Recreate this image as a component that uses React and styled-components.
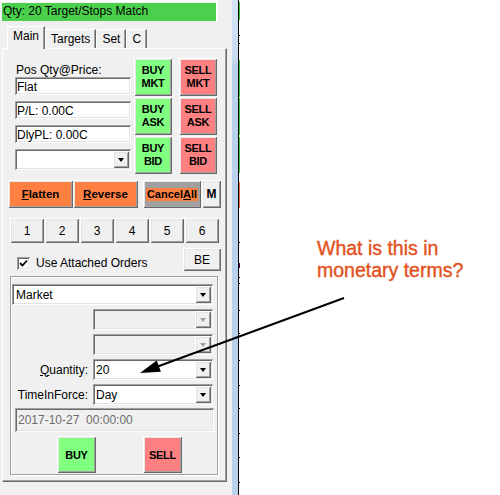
import React from 'react';
import styled, { createGlobalStyle, css } from 'styled-components';

const Global = createGlobalStyle`
  html, body { margin: 0; padding: 0; background: #ffffff; }
  body {
    font-family: "Liberation Sans", Arial, sans-serif;
    font-size: 12px;
    color: #000;
  }
  * { box-sizing: border-box; }
`;

/* classic 3D edges */
const raised = css`
  box-shadow: inset 1px 1px 0 #ffffff, inset -1px -1px 0 #696969,
    inset 2px 2px 0 #e3e3e3, inset -2px -2px 0 #a0a0a0;
`;
const sunken = css`
  box-shadow: inset 1px 1px 0 #a0a0a0, inset -1px -1px 0 #ffffff,
    inset 2px 2px 0 #696969, inset -2px -2px 0 #e3e3e3;
`;

const Page = styled.div`
  position: relative;
  width: 500px;
  height: 495px;
  overflow: hidden;
  display: flex;
`;

const Window = styled.div`
  width: 232px;
  flex: none;
  background: #f0f0f0;
  display: flex;
  flex-direction: column;
`;

const StatusFrame = styled.div`
  width: 218px;
  height: 22px;
  border-top: 2px solid #ffffff;
  border-right: 2px solid #ffffff;
  padding: 1px 0 1px 2px;
`;

const StatusLabel = styled.div`
  height: 18px;
  background: #4ccf4c;
  padding: 1px 0 0 1px;
  line-height: 14px;
  white-space: nowrap;
`;

const TabStrip = styled.div`
  display: flex;
  align-items: flex-end;
  height: 22px;
  margin: 4px 0 0 7px;
`;

const Tab = styled.div`
  position: relative;
  height: ${(p) => (p.$active ? 23 : 19)}px;
  margin-bottom: ${(p) => (p.$active ? -1 : 0)}px;
  z-index: ${(p) => (p.$active ? 1 : 0)};
  padding: 2px 5px 0 5px;
  line-height: 14px;
  background: #f0f0f0;
  border-top: 1px solid #ffffff;
  border-left: 1px solid #ffffff;
  border-right: 1px solid #696969;
  box-shadow: inset -1px 0 0 #a0a0a0;
`;

const Panel = styled.div`
  margin-left: 2px;
  width: 225px;
  border-style: solid;
  border-width: 1px;
  border-color: #ffffff #696969 #696969 #ffffff;
  box-shadow: inset -1px -1px 0 #a0a0a0;
  padding: 9px 0 6px 0;
  display: flex;
  flex-direction: column;
`;

const TradeBlock = styled.div`
  display: flex;
  padding-left: 12px;
`;

const InfoColumn = styled.div`
  width: 116px;
  padding-top: 5px;
  display: flex;
  flex-direction: column;
`;

const FieldLabel = styled.div`
  line-height: 14px;
  padding-left: 1px;
`;

const TextBox = styled.div`
  height: 18px;
  background: #ffffff;
  ${sunken};
  padding: 3px 0 0 2px;
  line-height: 14px;
  white-space: nowrap;
  & + & { margin-top: 6px; }
`;

const ComboBox = styled.div`
  display: flex;
  height: ${(p) => p.$height || 21}px;
  width: ${(p) => p.$width}px;
  margin-top: ${(p) => p.$top || 0}px;
  margin-left: ${(p) => p.$left || 0}px;
  background: ${(p) => (p.$disabled ? '#f0f0f0' : '#ffffff')};
  ${sunken};
  padding: 2px;
`;

const ComboText = styled.div`
  flex: 1;
  line-height: 14px;
  padding: 2px 0 0 ${(p) => p.$indent || 1}px;
  white-space: nowrap;
`;

const DropButton = styled.div`
  width: 16px;
  background: #f0f0f0;
  ${raised};
  display: flex;
  align-items: center;
  justify-content: center;
`;

const Arrow = styled.span`
  width: 0;
  height: 0;
  border-left: 3.5px solid transparent;
  border-right: 3.5px solid transparent;
  border-top: 4px solid ${(p) => (p.$disabled ? '#a0a0a0' : '#000000')};
  margin-top: 1px;
`;

const QuickGrid = styled.div`
  margin-left: 3px;
  display: grid;
  grid-template-columns: 38px 38px;
  grid-auto-rows: 38px;
  column-gap: 7px;
  row-gap: 1px;
`;

const tones = {
  buy: '#80ff80',
  sell: '#ff8080',
  orange: '#ff8040',
  gray: '#a0a0a0',
  plain: '#f0f0f0',
};

const QuickButton = styled.div`
  background: ${(p) => tones[p.$tone]};
  ${raised};
  display: flex;
  align-items: center;
  justify-content: center;
  text-align: center;
  font-weight: bold;
  font-size: 11px;
  letter-spacing: -0.3px;
  line-height: 13px;
`;

const ActionRow = styled.div`
  display: flex;
  height: 28px;
  margin-top: 6px;
  padding-left: 5px;
`;

const ActionButton = styled.div`
  width: ${(p) => p.$w}px;
  margin-left: ${(p) => p.$gap || 0}px;
  background: ${(p) => tones[p.$tone]};
  ${raised};
  display: flex;
  align-items: center;
  justify-content: center;
  font-weight: bold;
  font-size: ${(p) => p.$size || 11.5}px;
  white-space: nowrap;
`;

const CancelLabel = styled.span`
  background: #ff8040;
  font-size: 11px;
  line-height: 13px;
  padding: 0 1px;
`;

const NumberRow = styled.div`
  display: flex;
  gap: 1px;
  height: 25px;
  margin-top: 10px;
  padding-left: 7px;
`;

const NumberButton = styled.div`
  width: 34px;
  background: #f0f0f0;
  ${raised};
  display: flex;
  align-items: center;
  justify-content: center;
`;

const OptionRow = styled.div`
  display: flex;
  align-items: flex-start;
  height: 23px;
  margin-top: 5px;
  padding-left: 14px;
`;

const CheckBox = styled.span`
  width: 13px;
  height: 13px;
  margin-top: 9px;
  background: #ffffff;
  ${sunken};
  display: flex;
  align-items: center;
  justify-content: center;
`;

const CheckLabel = styled.span`
  margin: 8px 0 0 6px;
  line-height: 14px;
`;

const SmallButton = styled.div`
  width: 38px;
  height: 23px;
  margin: 0 5px 0 auto;
  background: #f0f0f0;
  ${raised};
  display: flex;
  align-items: center;
  justify-content: center;
`;

const GroupBox = styled.div`
  width: 208px;
  margin: 5px 0 0 7px;
  border: 1px solid #a0a0a0;
  box-shadow: inset 1px 1px 0 #ffffff, 1px 1px 0 #ffffff;
  padding: 7px 0 1px 0;
  display: flex;
  flex-direction: column;
  gap: 4px;
`;

const FieldRow = styled.div`
  display: grid;
  grid-template-columns: 82px 120px;
  align-items: center;
`;

const RowLabel = styled.span`
  text-align: right;
  padding-right: 5px;
  line-height: 14px;
  white-space: nowrap;
`;

const DateField = styled.div`
  height: 24px;
  width: 199px;
  margin: -1px 0 0 4px;
  background: #f0f0f0;
  ${sunken};
  padding: 5px 0 0 3px;
  line-height: 14px;
  color: #6d6d6d;
  white-space: pre;
`;

const SubmitRow = styled.div`
  display: flex;
  gap: 47px;
  padding-left: 46px;
`;

const SubmitButton = styled.div`
  width: 39px;
  height: 37px;
  background: ${(p) => tones[p.$tone]};
  ${raised};
  display: flex;
  align-items: center;
  justify-content: center;
  font-weight: bold;
  font-size: 11px;
  letter-spacing: -0.3px;
`;

const BorderStrip = styled.div`
  width: 7px;
  flex: none;
  background: linear-gradient(
    to bottom,
    #d4e5f6 0,
    #c8dcf0 60px,
    #b9d1ea 66px,
    #b9d1ea 100%
  );
  border-right: 1px solid #000000;
`;

const Desktop = styled.div`
  flex: 1;
  background: #ffffff;
`;

const EdgeMarks = styled.svg`
  display: block;
`;

const Overlay = styled.svg`
  position: absolute;
  left: 0;
  top: 0;
  pointer-events: none;
`;

const Note = styled.div`
  position: absolute;
  left: 317px;
  top: 238px;
  font-family: "Liberation Sans", Arial, sans-serif;
  font-size: 19.5px;
  line-height: 21.5px;
  color: #e2521d;
  -webkit-text-stroke: 0.4px #e2521d;
`;

const tabs = ['Main', 'Targets', 'Set', 'C'];

const edgeMarks = [
  [2, 18, '#3cc83c'],
  [35, 1, '#000'],
  [43, 1, '#000'],
  [60, 37, '#3cc83c'],
  [98, 37, '#3cc83c'],
  [137, 36, '#3cc83c'],
  [182, 26, '#e8703a'],
  [242, 1, '#000'],
  [263, 5, '#400040'],
  [277, 1, '#000'],
  [283, 1, '#000'],
  [310, 1, '#000'],
  [333, 1, '#000'],
  [360, 1, '#000'],
  [385, 1, '#000'],
  [408, 1, '#000'],
  [433, 1, '#000'],
  [457, 1, '#000'],
  [482, 1, '#000'],
];

function Combo({ width, text, disabled, top, left, indent }) {
  return (
    <ComboBox $width={width} $disabled={disabled} $top={top} $left={left}>
      <ComboText $indent={indent}>{text}</ComboText>
      <DropButton>
        <Arrow $disabled={disabled} />
      </DropButton>
    </ComboBox>
  );
}

export default function App() {
  return (
    <>
      <Global />
      <Page>
        <Window>
          <StatusFrame>
            <StatusLabel>Qty: 20 Target/Stops Match</StatusLabel>
          </StatusFrame>
          <TabStrip>
            {tabs.map((t) => (
              <Tab key={t} $active={t === 'Main'}>
                {t}
              </Tab>
            ))}
          </TabStrip>
          <Panel>
            <TradeBlock>
              <InfoColumn>
                <FieldLabel>Pos Qty@Price:</FieldLabel>
                <TextBox>Flat</TextBox>
                <TextBox>P/L: 0.00C</TextBox>
                <TextBox>DlyPL: 0.00C</TextBox>
                <Combo width={116} top={6} text="" />
              </InfoColumn>
              <QuickGrid>
                <QuickButton $tone="buy">BUY<br />MKT</QuickButton>
                <QuickButton $tone="sell">SELL<br />MKT</QuickButton>
                <QuickButton $tone="buy">BUY<br />ASK</QuickButton>
                <QuickButton $tone="sell">SELL<br />ASK</QuickButton>
                <QuickButton $tone="buy">BUY<br />BID</QuickButton>
                <QuickButton $tone="sell">SELL<br />BID</QuickButton>
              </QuickGrid>
            </TradeBlock>

            <ActionRow>
              <ActionButton $w={65} $tone="orange">
                <span><u>F</u>latten</span>
              </ActionButton>
              <ActionButton $w={65} $tone="orange">
                <span><u>R</u>everse</span>
              </ActionButton>
              <ActionButton $w={58} $gap={5} $tone="gray">
                <CancelLabel>Cancel<u>A</u>ll</CancelLabel>
              </ActionButton>
              <ActionButton $w={19} $gap={1} $tone="plain" $size={12}>
                M
              </ActionButton>
            </ActionRow>

            <NumberRow>
              {[1, 2, 3, 4, 5, 6].map((n) => (
                <NumberButton key={n}>{n}</NumberButton>
              ))}
            </NumberRow>

            <OptionRow>
              <CheckBox>
                <svg width="9" height="9" viewBox="0 0 9 9">
                  <path d="M1 4 L3.5 6.5 L8 1.5" fill="none" stroke="#000" strokeWidth="1.8" />
                </svg>
              </CheckBox>
              <CheckLabel>Use Attached Orders</CheckLabel>
              <SmallButton>BE</SmallButton>
            </OptionRow>

            <GroupBox>
              <Combo width={201} left={1} text="Market" indent={2} />
              <FieldRow>
                <span />
                <Combo width={120} text="" disabled />
              </FieldRow>
              <FieldRow>
                <span />
                <Combo width={120} text="" disabled />
              </FieldRow>
              <FieldRow>
                <RowLabel><u>Q</u>uantity:</RowLabel>
                <Combo width={120} text="20" />
              </FieldRow>
              <FieldRow>
                <RowLabel>TimeInForce:</RowLabel>
                <Combo width={120} text="Day" />
              </FieldRow>
              <DateField>2017-10-27  00:00:00</DateField>
              <SubmitRow>
                <SubmitButton $tone="buy">BUY</SubmitButton>
                <SubmitButton $tone="sell">SELL</SubmitButton>
              </SubmitRow>
            </GroupBox>
          </Panel>
        </Window>

        <BorderStrip />

        <Desktop>
          <EdgeMarks width="3" height="495">
            {edgeMarks.map(([y, h, c]) => (
              <rect key={y} x="0" y={y} width="1" height={h} fill={c} />
            ))}
          </EdgeMarks>
        </Desktop>

        <Note>
          What is this in
          <br />
          monetary terms?
        </Note>

        <Overlay width="500" height="495" viewBox="0 0 500 495">
          <line x1="344" y1="298" x2="157" y2="366.7" stroke="#000" strokeWidth="2" />
          <polygon points="140,373 156.7,360.5 160.9,371.7" fill="#000" />
        </Overlay>
      </Page>
    </>
  );
}
